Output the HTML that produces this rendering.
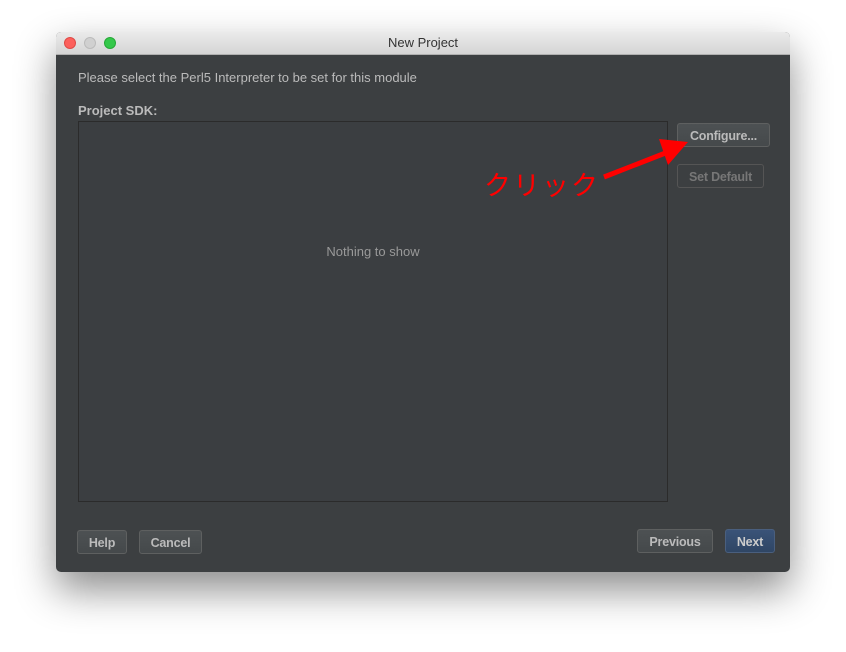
<!DOCTYPE html>
<html><head><style>
body{margin:0;width:846px;height:652px;background:#fff;position:relative;overflow:hidden;font-family:"Liberation Sans",sans-serif}
.win{position:absolute;left:56px;top:32px;width:734px;height:540px;border-radius:5px;background:#3c3f41;box-shadow:0 18px 40px rgba(0,0,0,.45);overflow:hidden}
.tb{height:22px;background:linear-gradient(#ebebeb,#d5d5d5);border-bottom:1px solid #b0b0b0;text-align:center;font-size:13px;line-height:22px;color:#333;position:relative}
.dot{position:absolute;top:5px;width:12px;height:12px;border-radius:50%}
.t{position:absolute;color:#bbb;font-size:13px}
.list{position:absolute;left:22px;top:89px;width:588px;height:379px;border:1px solid #2b2b2b;background:#3b3e41}
.btn{position:absolute;height:24px;border:1px solid #5e6060;border-radius:3px;background:linear-gradient(#4d5153,#45494b);color:#bbb;font-size:12.5px;font-weight:bold;line-height:24px;text-align:center;box-sizing:border-box;letter-spacing:-0.2px}
</style></head><body>
<div class="win">
<div class="tb">New Project
<div class="dot" style="left:8px;background:#fc605c;border:1px solid #de4a46;box-sizing:border-box"></div>
<div class="dot" style="left:28px;background:#d0d0d0;border:1px solid #bbb;box-sizing:border-box"></div>
<div class="dot" style="left:48px;background:#34c84a;border:1px solid #26a837;box-sizing:border-box"></div>
</div>
<div class="t" style="left:22px;top:38px">Please select the Perl5 Interpreter to be set for this module</div>
<div class="t" style="left:22px;top:71px;font-weight:bold">Project SDK:</div>
<div class="list"><div class="t" style="left:0;right:0;top:122px;text-align:center;color:#999">Nothing to show</div></div>
<div class="btn" style="left:621px;top:91px;width:93px">Configure...</div>
<div class="btn" style="left:621px;top:132px;width:87px;color:#777;background:#3c3f41;border-color:#555">Set Default</div>
<div class="btn" style="left:21px;top:498px;width:50px">Help</div>
<div class="btn" style="left:83px;top:498px;width:63px">Cancel</div>
<div class="btn" style="left:581px;top:497px;width:76px">Previous</div>
<div class="btn" style="left:669px;top:497px;width:50px;background:linear-gradient(#3a5378,#2f4665);border-color:#4a5f7e;color:#ccc">Next</div>
</div>
<div style="position:absolute;left:484px;top:164px;color:#f00;font-size:27px;font-family:'Liberation Sans','Noto Sans CJK JP',sans-serif;letter-spacing:2px">クリック</div>
<svg style="position:absolute;left:0;top:0" width="846" height="652"><line x1="604" y1="177" x2="668" y2="152" stroke="#f00" stroke-width="5"/><polygon points="688,142 659,139 668,165" fill="#f00"/></svg>
</body></html>
